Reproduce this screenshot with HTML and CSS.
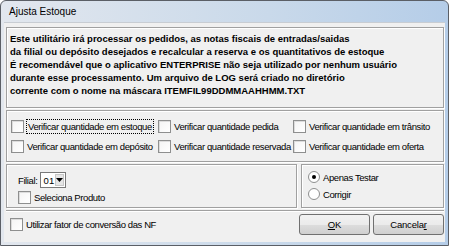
FILE: index.html
```html
<!DOCTYPE html>
<html lang="pt-BR">
<head>
    <meta charset="UTF-8">
    <title>Ajusta Estoque</title>
    <link rel="stylesheet" href="styles.css">
</head>
<body>
    <div class="window">
        <div class="titlebar">Ajusta Estoque</div>
        <div class="client">
            <div class="panel info">
                <p>Este utilitário irá processar os pedidos, as notas fiscais de entradas/saidas<br>
                da filial ou depósito desejados e recalcular a reserva e os quantitativos de estoque<br>
                É recomendável que o aplicativo ENTERPRISE não seja utilizado por nenhum usuário<br>
                durante esse processamento. Um arquivo de LOG será criado no diretório<br>
                corrente com o nome na máscara ITEMFIL99DDMMAAHHMM.TXT</p>
            </div>

            <div class="panel checks">
                <label class="check"><span class="box"></span><span class="focus">Verificar quantidade em estoque</span></label>
                <label class="check"><span class="box"></span>Verificar quantidade pedida</label>
                <label class="check"><span class="box"></span>Verificar quantidade em trânsito</label>
                <label class="check"><span class="box"></span>Verificar quantidade em depósito</label>
                <label class="check"><span class="box"></span>Verificar quantidade reservada</label>
                <label class="check"><span class="box"></span>Verificar quantidade em oferta</label>
            </div>

            <div class="row">
                <div class="panel filial">
                    <div class="filial-line">
                        <span>Filial:</span>
                        <div class="combo">
                            <span class="combo-value">01</span>
                            <span class="combo-btn">
                                <svg width="7" height="4" viewBox="0 0 7 4"><path d="M0 0h7L3.5 4z" fill="#000"/></svg>
                            </span>
                        </div>
                    </div>
                    <label class="check"><span class="box"></span>Seleciona Produto</label>
                </div>
                <div class="panel mode">
                    <label class="radio"><span class="dot checked"></span>Apenas Testar</label>
                    <label class="radio"><span class="dot"></span>Corrigir</label>
                </div>
            </div>

            <div class="separator"></div>

            <div class="footer">
                <label class="check"><span class="box"></span>Utilizar fator de conversão das NF</label>
                <div class="buttons">
                    <button class="btn"><u>O</u>K</button>
                    <button class="btn">Cancela<u>r</u></button>
                </div>
            </div>
        </div>
    </div>
</body>
</html>
```

FILE: styles.css
```css
body {
    margin: 0;
    padding: 0;
    font-family: "Liberation Sans", Arial, sans-serif;
    font-size: 9.5px;
    color: #000;
    background-color: #ffffff;
}
.window {
    width: 449px;
    height: 246px;
    box-sizing: border-box;
    border: 1px solid #5b5f66;
    border-radius: 6px 6px 0 0;
    background: linear-gradient(to right, #e2e7ee, #c9d9ea 60%, #b5cde8);
    padding: 0 3px 3px 3px;
    display: flex;
    flex-direction: column;
}
.titlebar {
    height: 21px;
    display: flex;
    align-items: center;
    padding-left: 5px;
    font-size: 10px;
}
.client {
    flex: 1;
    background-color: #f0f0f0;
    border-top: 1px solid #c8cdd3;
    display: flex;
    flex-direction: column;
    padding: 4px 1px 0 2px;
    letter-spacing: -0.4px;
    white-space: nowrap;
}
.panel {
    border: 1px solid #a0a0a0;
    box-shadow: inset 1px 1px 0 #ffffff, 1px 1px 0 #ffffff;
}
.info {
    height: 81px;
    box-sizing: border-box;
    padding: 4px 3px;
    letter-spacing: 0;
}
.info p {
    margin: 0;
    font-weight: bold;
    line-height: 13px;
}
.checks {
    margin-top: 2px;
    height: 52px;
    box-sizing: border-box;
    display: grid;
    grid-template-columns: 147px 135px auto;
    grid-auto-rows: 20px;
    align-content: center;
    padding-left: 4px;
}
.check {
    display: flex;
    align-items: center;
    gap: 3px;
}
.box {
    width: 11px;
    height: 11px;
    border: 1px solid #8e8f8f;
    background: linear-gradient(135deg, #f4f4f4, #ffffff);
    box-shadow: inset 1px 1px 0 #dcdcdc;
    flex: none;
}
.focus {
    outline: 1px dotted #000;
    padding: 1px 1px;
}
.row {
    margin-top: 2px;
    height: 44px;
    display: flex;
    gap: 4px;
}
.filial {
    width: 291px;
    box-sizing: border-box;
    padding: 7px 0 0 11px;
    display: flex;
    flex-direction: column;
    gap: 3px;
}
.filial-line {
    display: flex;
    align-items: center;
    gap: 3px;
}
.combo {
    width: 26px;
    height: 16px;
    box-sizing: border-box;
    border: 1px solid #7a7a7a;
    background: #ffffff;
    display: flex;
    align-items: center;
    justify-content: space-between;
    padding-left: 2px;
    letter-spacing: 0.3px;
}
.combo-btn {
    width: 9px;
    height: 12px;
    margin-right: 1px;
    background: #e6e6e6;
    border: 1px solid #c8c8c8;
    box-sizing: border-box;
    display: flex;
    align-items: center;
    justify-content: center;
}
.mode {
    flex: 1;
    box-sizing: border-box;
    padding: 6px 0 0 6px;
    display: flex;
    flex-direction: column;
    gap: 5px;
}
.radio {
    display: flex;
    align-items: center;
    gap: 3px;
}
.dot {
    width: 10px;
    height: 10px;
    border: 1px solid #8e8f8f;
    border-radius: 50%;
    background: #ffffff;
    display: flex;
    align-items: center;
    justify-content: center;
}
.dot.checked::after {
    content: "";
    width: 4px;
    height: 4px;
    border-radius: 50%;
    background: #000;
}
.separator {
    margin-top: 2px;
    border-top: 1px solid #a0a0a0;
    border-bottom: 1px solid #ffffff;
}
.footer {
    display: flex;
    align-items: center;
    justify-content: space-between;
    padding: 2px 0 0 4px;
}
.buttons {
    display: flex;
    gap: 3px;
}
.btn {
    width: 71px;
    height: 21px;
    font-family: "Liberation Sans", Arial, sans-serif;
    font-size: 9.5px;
    letter-spacing: -0.2px;
    border: 1px solid #707070;
    border-radius: 3px;
    background: linear-gradient(#f2f2f2, #ebebeb 50%, #dddddd 51%, #cfcfcf);
    padding: 0;
}
```
